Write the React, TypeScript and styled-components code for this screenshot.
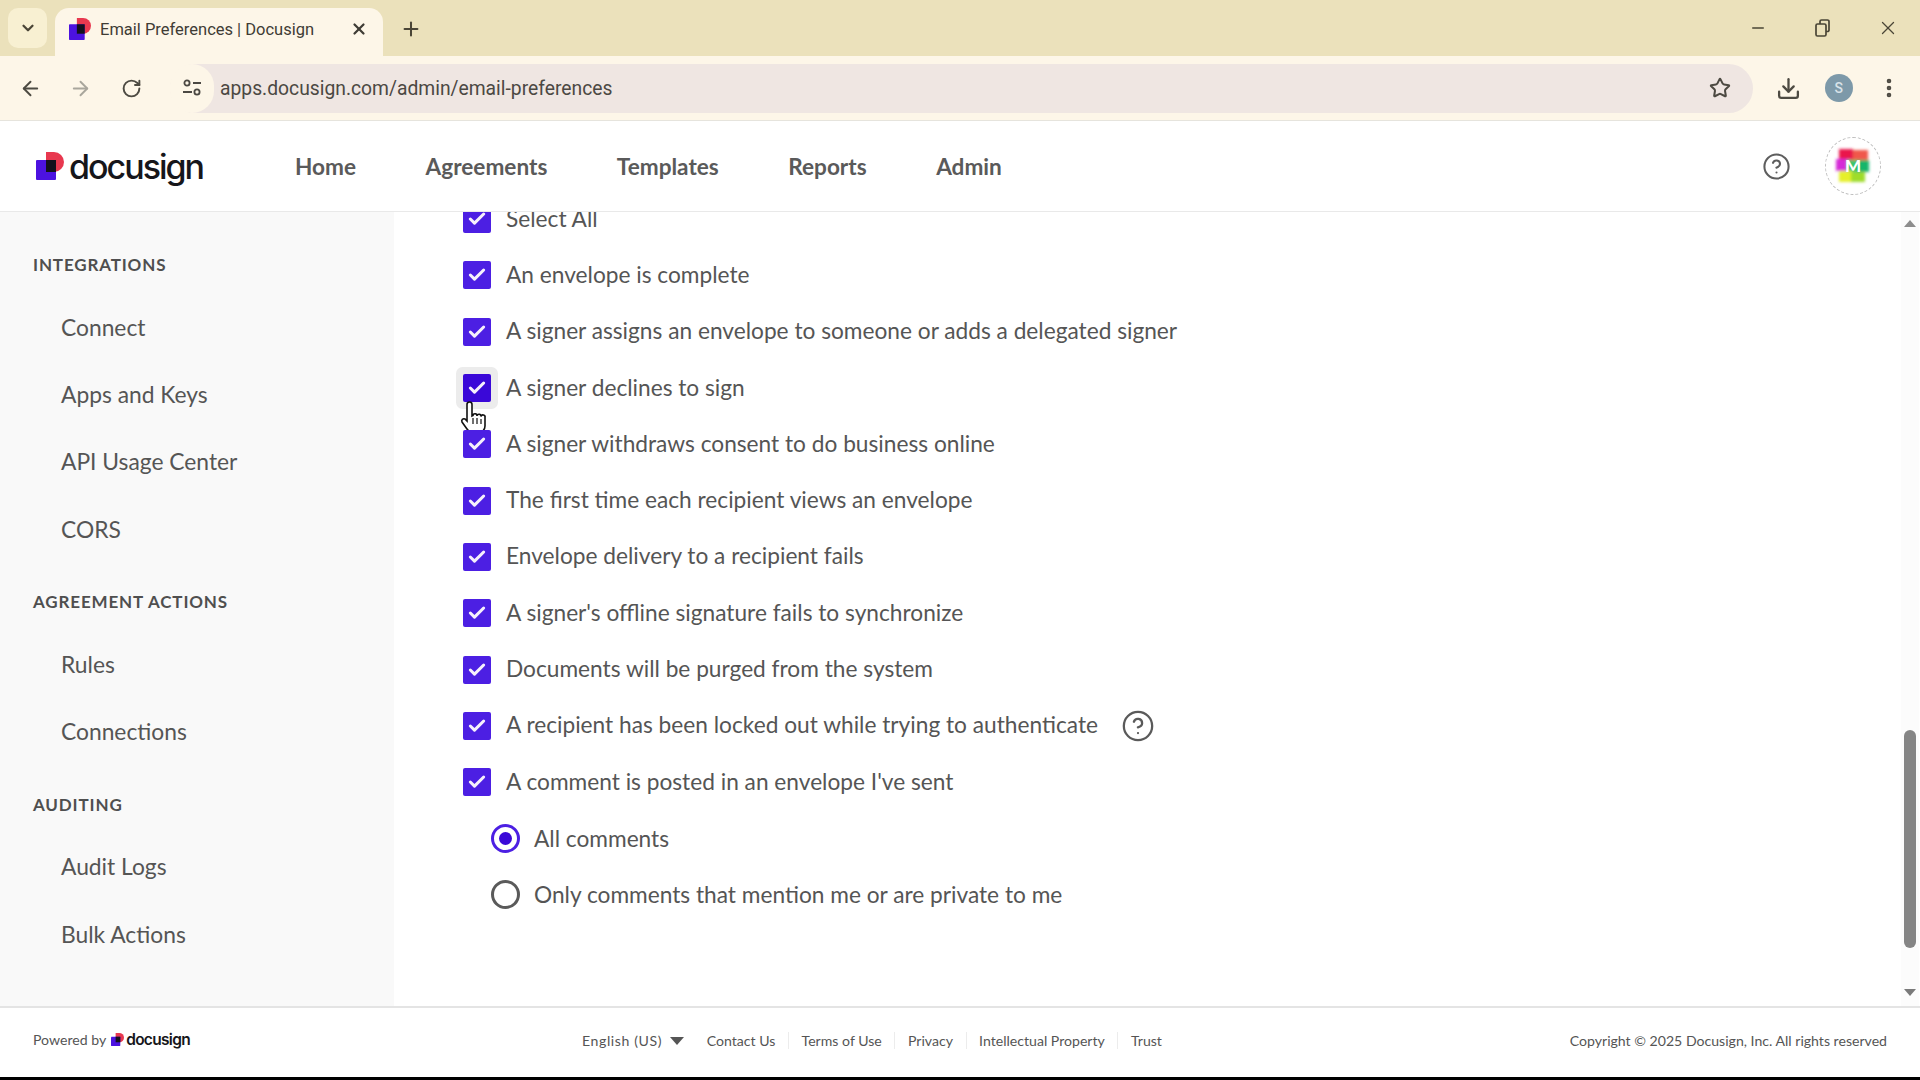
import styled, { createGlobalStyle } from "styled-components";
import {
  ArrowLeft,
  ArrowRight,
  RotateCw,
  Star,
  Download,
  EllipsisVertical,
  X,
  Plus,
  ChevronDown,
  Minus,
  CircleHelp,
  Check,
} from "lucide-react";

const GlobalStyle = createGlobalStyle`
  html, body { margin: 0; padding: 0; background: #fff; }
  * { box-sizing: border-box; }
  body { font-family: "Lato", "Liberation Sans", sans-serif; }
`;

const Page = styled.div`
  width: 1920px;
  height: 1080px;
  display: flex;
  flex-direction: column;
  overflow: hidden;
  border-bottom: 3px solid #000;
`;

const TabStrip = styled.div`
  height: 56px;
  flex: none;
  background: #ebe1bb;
  display: flex;
  align-items: flex-end;
  padding-left: 8px;
  color: #4a4536;
`;

const TabSearch = styled.div`
  width: 39px;
  height: 40px;
  margin-bottom: 8px;
  border-radius: 10px;
  background: #f8f0d2;
  display: flex;
  align-items: center;
  justify-content: center;
`;

const Tab = styled.div`
  width: 328px;
  height: 48px;
  margin-left: 8px;
  padding: 0 15px 6px 14px;
  background: #fdf6e8;
  border-radius: 14px 14px 0 0;
  display: flex;
  align-items: center;
  gap: 9px;
  font: 400 16.5px "Roboto", sans-serif;
  color: #3f3c35;
`;

const TabTitle = styled.span`
  flex: 1;
  white-space: nowrap;
`;

const NewTab = styled.div`
  width: 44px;
  height: 48px;
  margin-left: 6px;
  display: flex;
  align-items: center;
  justify-content: center;
  padding-bottom: 6px;
`;

const WindowControls = styled.div`
  margin-left: auto;
  align-self: flex-start;
  display: flex;
  align-items: center;
  height: 56px;
`;

const WindowButton = styled.div`
  width: 65px;
  display: flex;
  justify-content: center;
`;

const Toolbar = styled.div`
  height: 65px;
  flex: none;
  background: #fdf6e8;
  border-bottom: 1px solid #e6e4dd;
  display: flex;
  align-items: center;
  padding: 0 0 0 10px;
  color: #4d4a42;
`;

const NavButton = styled.div<{ $muted?: boolean }>`
  width: 40px;
  height: 40px;
  margin-right: 10.5px;
  display: flex;
  align-items: center;
  justify-content: center;
  color: ${(p) => (p.$muted ? "#a9a69c" : "#4d4a42")};
`;

const Omnibox = styled.div`
  width: 1583px;
  height: 49px;
  margin-left: 8.5px;
  border-radius: 25px;
  background: #efe6e2;
  display: flex;
  align-items: center;
  padding-right: 22px;
`;

const SiteChip = styled.div`
  width: 44px;
  height: 49px;
  flex: none;
  border-radius: 25px;
  background: #fdf6e8;
  display: flex;
  align-items: center;
  justify-content: center;
`;

const Url = styled.span`
  flex: 1;
  margin-left: 6px;
  font: 400 19.3px "Roboto", sans-serif;
  color: #4b4843;
`;

const ToolIcons = styled.div`
  display: flex;
  align-items: center;
  margin-left: 10px;
`;

const ToolIcon = styled.div`
  width: 50.5px;
  display: flex;
  justify-content: center;
`;

const ProfileDot = styled.div`
  width: 28px;
  height: 28px;
  border-radius: 50%;
  background: #7d99a9;
  color: #d8e2e8;
  font: 500 14px "Roboto", sans-serif;
  display: flex;
  align-items: center;
  justify-content: center;
`;

const AppHeader = styled.header`
  height: 91px;
  flex: none;
  background: #fff;
  border-bottom: 1px solid #e9e9e9;
  display: flex;
  align-items: center;
  padding: 0 39px 0 36px;
`;

const Brand = styled.div<{ $small?: boolean }>`
  display: flex;
  align-items: center;
  gap: ${(p) => (p.$small ? "2px" : "5px")};
  font: ${(p) => (p.$small ? "600 15.5px" : "500 34px")} "Inter", sans-serif;
  letter-spacing: ${(p) => (p.$small ? "-0.7px" : "-2px")};
  color: #16161a;
`;

const Nav = styled.nav`
  display: flex;
  gap: 69.5px;
  margin-left: 92px;
`;

const NavLink = styled.a`
  font: 700 22.6px "Lato", sans-serif;
  color: #5a5a5a;
`;

const HeaderRight = styled.div`
  margin-left: auto;
  display: flex;
  align-items: center;
  gap: 34px;
  color: #5e5e5e;
`;

const Avatar = styled.div`
  width: 56px;
  height: 58px;
  border-radius: 50%;
  border: 1px dashed #bdbdbd;
  display: flex;
  align-items: center;
  justify-content: center;
`;

const Body = styled.div`
  flex: 1;
  min-height: 0;
  display: flex;
`;

const Sidebar = styled.aside`
  width: 394px;
  flex: none;
  background: #f9f9f9;
  padding-top: 24px;
`;

const Section = styled.section`
  & + & {
    margin-top: 11px;
  }
`;

const SectionTitle = styled.div`
  height: 57px;
  padding-left: 33px;
  display: flex;
  align-items: center;
  font: 700 17px "Lato", sans-serif;
  letter-spacing: 0.85px;
  color: #4f4f4f;
`;

const SideItem = styled.div`
  height: 67.3px;
  padding-left: 61px;
  display: flex;
  align-items: center;
  font: 400 22.8px "Lato", sans-serif;
  color: #555;
`;

const Main = styled.main`
  flex: 1;
  min-width: 0;
  overflow: hidden;
  padding-left: 69px;
  background: #fff;
`;

const Options = styled.div`
  margin-top: -21px;
`;

const Row = styled.div<{ $sub?: boolean }>`
  height: 56.3px;
  position: relative;
  display: flex;
  align-items: center;
  gap: ${(p) => (p.$sub ? "14px" : "15px")};
  padding-left: ${(p) => (p.$sub ? "28px" : "0")};
  font: 400 22.7px "Lato", sans-serif;
  color: #555;
`;

const Label = styled.span`
  margin-top: -2px;
`;

const Box = styled.span<{ $hover?: boolean }>`
  width: 28px;
  height: 28px;
  flex: none;
  border-radius: 2px;
  color: #f6f0fc;
  display: flex;
  align-items: center;
  justify-content: center;
  background: ${(p) => (p.$hover ? "#3a08d8" : "#4c1fe3")};
  box-shadow: ${(p) => (p.$hover ? "0 0 0 7px #ececec" : "none")};
`;

const Radio = styled.span<{ $on?: boolean }>`
  width: 29px;
  height: 29px;
  flex: none;
  border-radius: 50%;
  border: 3px solid ${(p) => (p.$on ? "#4c1fe3" : "#5a5a5a")};
  display: flex;
  align-items: center;
  justify-content: center;
  &::after {
    content: "";
    width: 13px;
    height: 13px;
    border-radius: 50%;
    background: ${(p) => (p.$on ? "#3a08d8" : "transparent")};
  }
`;

const RowHelp = styled.span`
  display: flex;
  margin-left: 8px;
  color: #5a5a5a;
`;

const Pointer = styled.svg`
  position: absolute;
  left: -3px;
  top: 41px;
`;

const ScrollTrack = styled.div`
  width: 18px;
  flex: none;
  margin-right: 1px;
  background: #fcfcfc;
  display: flex;
  flex-direction: column;
  align-items: center;
  padding-top: 8px;
`;

const ScrollThumb = styled.div`
  width: 12px;
  height: 218px;
  margin-top: 503px;
  border-radius: 6px;
  background: #858585;
`;

const ScrollArrow = styled.div<{ $down?: boolean }>`
  width: 0;
  height: 0;
  border-left: 6px solid transparent;
  border-right: 6px solid transparent;
  ${(p) =>
    p.$down
      ? "border-top: 7px solid #7a7a7a; margin-top: 41px;"
      : "border-bottom: 7px solid #8d8d8d;"}
`;

const Footer = styled.footer`
  height: 71px;
  flex: none;
  background: #fff;
  border-top: 2px solid #e4e4e4;
  display: flex;
  align-items: center;
  padding: 0 33px 4px;
  font: 400 14.1px "Lato", sans-serif;
  color: #555;
`;

const Powered = styled.div`
  display: flex;
  align-items: center;
  gap: 5px;
  margin-top: -2px;
  width: 549px;
`;

const Language = styled.div`
  display: flex;
  align-items: center;
  gap: 8px;
  margin-right: 10px;
  letter-spacing: 0.6px;
`;

const Caret = styled.span`
  width: 0;
  height: 0;
  border-left: 7px solid transparent;
  border-right: 7px solid transparent;
  border-top: 8px solid #555;
`;

const FooterLink = styled.a`
  padding: 0 12.6px;
  border-left: 1px solid #ececec;
  &:first-of-type {
    border-left: 0;
  }
`;

const Copyright = styled.span`
  margin-left: auto;
`;

function LogoMark({ size }: { size: number }) {
  return (
    <svg width={size} height={size} viewBox="0 0 28 28">
      <path d="M10 0h8a10 10 0 0 1 0 20h-8z" fill="#e8384f" />
      <rect x="0" y="8" width="20" height="20" rx="1" fill="#4c12e0" />
      <path d="M10 8h10v12h-10z" fill="#14101c" />
    </svg>
  );
}

const signers = [
  "An envelope is complete",
  "A signer assigns an envelope to someone or adds a delegated signer",
  "A signer declines to sign",
  "A signer withdraws consent to do business online",
  "The first time each recipient views an envelope",
  "Envelope delivery to a recipient fails",
  "A signer's offline signature fails to synchronize",
  "Documents will be purged from the system",
  "A recipient has been locked out while trying to authenticate",
  "A comment is posted in an envelope I've sent",
];

const sections = [
  { title: "INTEGRATIONS", items: ["Connect", "Apps and Keys", "API Usage Center", "CORS"] },
  { title: "AGREEMENT ACTIONS", items: ["Rules", "Connections"] },
  { title: "AUDITING", items: ["Audit Logs", "Bulk Actions"] },
];

export default function App() {
  return (
    <Page>
      <GlobalStyle />
      <TabStrip>
        <TabSearch>
          <ChevronDown size={18} strokeWidth={3} />
        </TabSearch>
        <Tab>
          <LogoMark size={22} />
          <TabTitle>Email Preferences | Docusign</TabTitle>
          <X size={18} strokeWidth={3} />
        </Tab>
        <NewTab>
          <Plus size={22} strokeWidth={2.2} />
        </NewTab>
        <WindowControls>
          <WindowButton>
            <Minus size={18} strokeWidth={2} />
          </WindowButton>
          <WindowButton>
            <svg width="16" height="18" viewBox="0 0 16 18" fill="none" stroke="currentColor" strokeWidth="1.7">
              <rect x="1" y="5" width="10" height="12" rx="1.5" />
              <path d="M5 5V2.5A1.5 1.5 0 0 1 6.500 1h6A1.500 1.500 0 0 1 14 2.500V11a1.500 1.500 0 0 1-1.500 1.500H11" />
            </svg>
          </WindowButton>
          <WindowButton>
            <X size={22} strokeWidth={1.4} />
          </WindowButton>
        </WindowControls>
      </TabStrip>
      <Toolbar>
        <NavButton>
          <ArrowLeft size={23} />
        </NavButton>
        <NavButton $muted>
          <ArrowRight size={23} />
        </NavButton>
        <NavButton>
          <RotateCw size={21} strokeWidth={2.2} />
        </NavButton>
        <Omnibox>
          <SiteChip>
            <svg width="20" height="18" viewBox="0 0 20 18" fill="none" stroke="#4b4843" strokeWidth="1.800">
              <circle cx="5" cy="4" r="2.600" />
              <path d="M11 4h8M1 13h9" />
              <circle cx="15" cy="13" r="2.600" />
            </svg>
          </SiteChip>
          <Url>apps.docusign.com/admin/email-preferences</Url>
          <Star size={22} strokeWidth={2.2} />
        </Omnibox>
        <ToolIcons>
          <ToolIcon>
            <Download size={25} strokeWidth={2.2} />
          </ToolIcon>
          <ToolIcon>
            <ProfileDot>S</ProfileDot>
          </ToolIcon>
          <ToolIcon>
            <EllipsisVertical size={24} strokeWidth={2.6} />
          </ToolIcon>
        </ToolIcons>
      </Toolbar>
      <AppHeader>
        <Brand>
          <LogoMark size={28} />
          docusign
        </Brand>
        <Nav>
          <NavLink>Home</NavLink>
          <NavLink>Agreements</NavLink>
          <NavLink>Templates</NavLink>
          <NavLink>Reports</NavLink>
          <NavLink>Admin</NavLink>
        </Nav>
        <HeaderRight>
          <CircleHelp size={29} strokeWidth={1.700} />
          <Avatar>
            <svg width="40" height="40" viewBox="0 0 40 40">
              <defs>
                <filter id="soft">
                  <feGaussianBlur stdDeviation="1.500" />
                </filter>
              </defs>
              <g filter="url(#soft)">
                <rect x="6" y="3" width="14" height="12" fill="#e9174b" />
                <rect x="20" y="4" width="15" height="12" fill="#f0584c" />
                <rect x="3" y="13" width="14" height="12" fill="#d52ad8" />
                <rect x="22" y="14" width="14" height="12" fill="#16b56a" />
                <rect x="14" y="14" width="10" height="14" fill="#3bc46c" />
                <rect x="6" y="25" width="14" height="11" fill="#e6f02a" />
                <rect x="18" y="26" width="14" height="10" fill="#9fdc2c" />
              </g>
              <text x="20" y="26" textAnchor="middle" fontFamily="Lato" fontWeight="900" fontSize="17" fill="#fff">
                M
              </text>
            </svg>
          </Avatar>
        </HeaderRight>
      </AppHeader>
      <Body>
        <Sidebar>
          {sections.map((section) => (
            <Section key={section.title}>
              <SectionTitle>{section.title}</SectionTitle>
              {section.items.map((item) => (
                <SideItem key={item}>{item}</SideItem>
              ))}
            </Section>
          ))}
        </Sidebar>
        <Main>
          <Options>
            <Row>
              <Box>
                <Check size={20} strokeWidth={3.600} />
              </Box>
              <Label>Select All</Label>
            </Row>
            {signers.map((label, i) => (
              <Row key={label}>
                <Box $hover={i === 2}>
                  <Check size={20} strokeWidth={3.600} />
                </Box>
                <Label>{label}</Label>
                {i === 2 && (
                  <Pointer width="27" height="34" viewBox="0 0 27 34">
                    <path
                      d="M7 3.500a2.500 2.500 0 0 1 5 0V15l1-.500a2 2 0 0 1 4 .500 2 2 0 0 1 4 .500 2 2 0 0 1 4 1V25c0 4-3 7-7 7h-4c-3 0-5-1-7-4l-5-7c-1-2 1-4 3-3l2 2z"
                      fill="#fff"
                      stroke="#111"
                      strokeWidth="1.600"
                    />
                    <path d="M13 17v6M17 17v6M21 18v5" stroke="#111" strokeWidth="1.200" />
                  </Pointer>
                )}
                {i === 8 && (
                  <RowHelp>
                    <CircleHelp size={34} strokeWidth={1.600} />
                  </RowHelp>
                )}
              </Row>
            ))}
            <Row $sub>
              <Radio $on />
              All comments
            </Row>
            <Row $sub>
              <Radio />
              Only comments that mention me or are private to me
            </Row>
          </Options>
        </Main>
        <ScrollTrack>
          <ScrollArrow />
          <ScrollThumb />
          <ScrollArrow $down />
        </ScrollTrack>
      </Body>
      <Footer>
        <Powered>
          Powered by
          <Brand $small>
            <LogoMark size={13} />
            docusign
          </Brand>
        </Powered>
        <Language>
          English (US)
          <Caret />
        </Language>
        <FooterLink>Contact Us</FooterLink>
        <FooterLink>Terms of Use</FooterLink>
        <FooterLink>Privacy</FooterLink>
        <FooterLink>Intellectual Property</FooterLink>
        <FooterLink>Trust</FooterLink>
        <Copyright>Copyright © 2025 Docusign, Inc. All rights reserved</Copyright>
      </Footer>
    </Page>
  );
}
